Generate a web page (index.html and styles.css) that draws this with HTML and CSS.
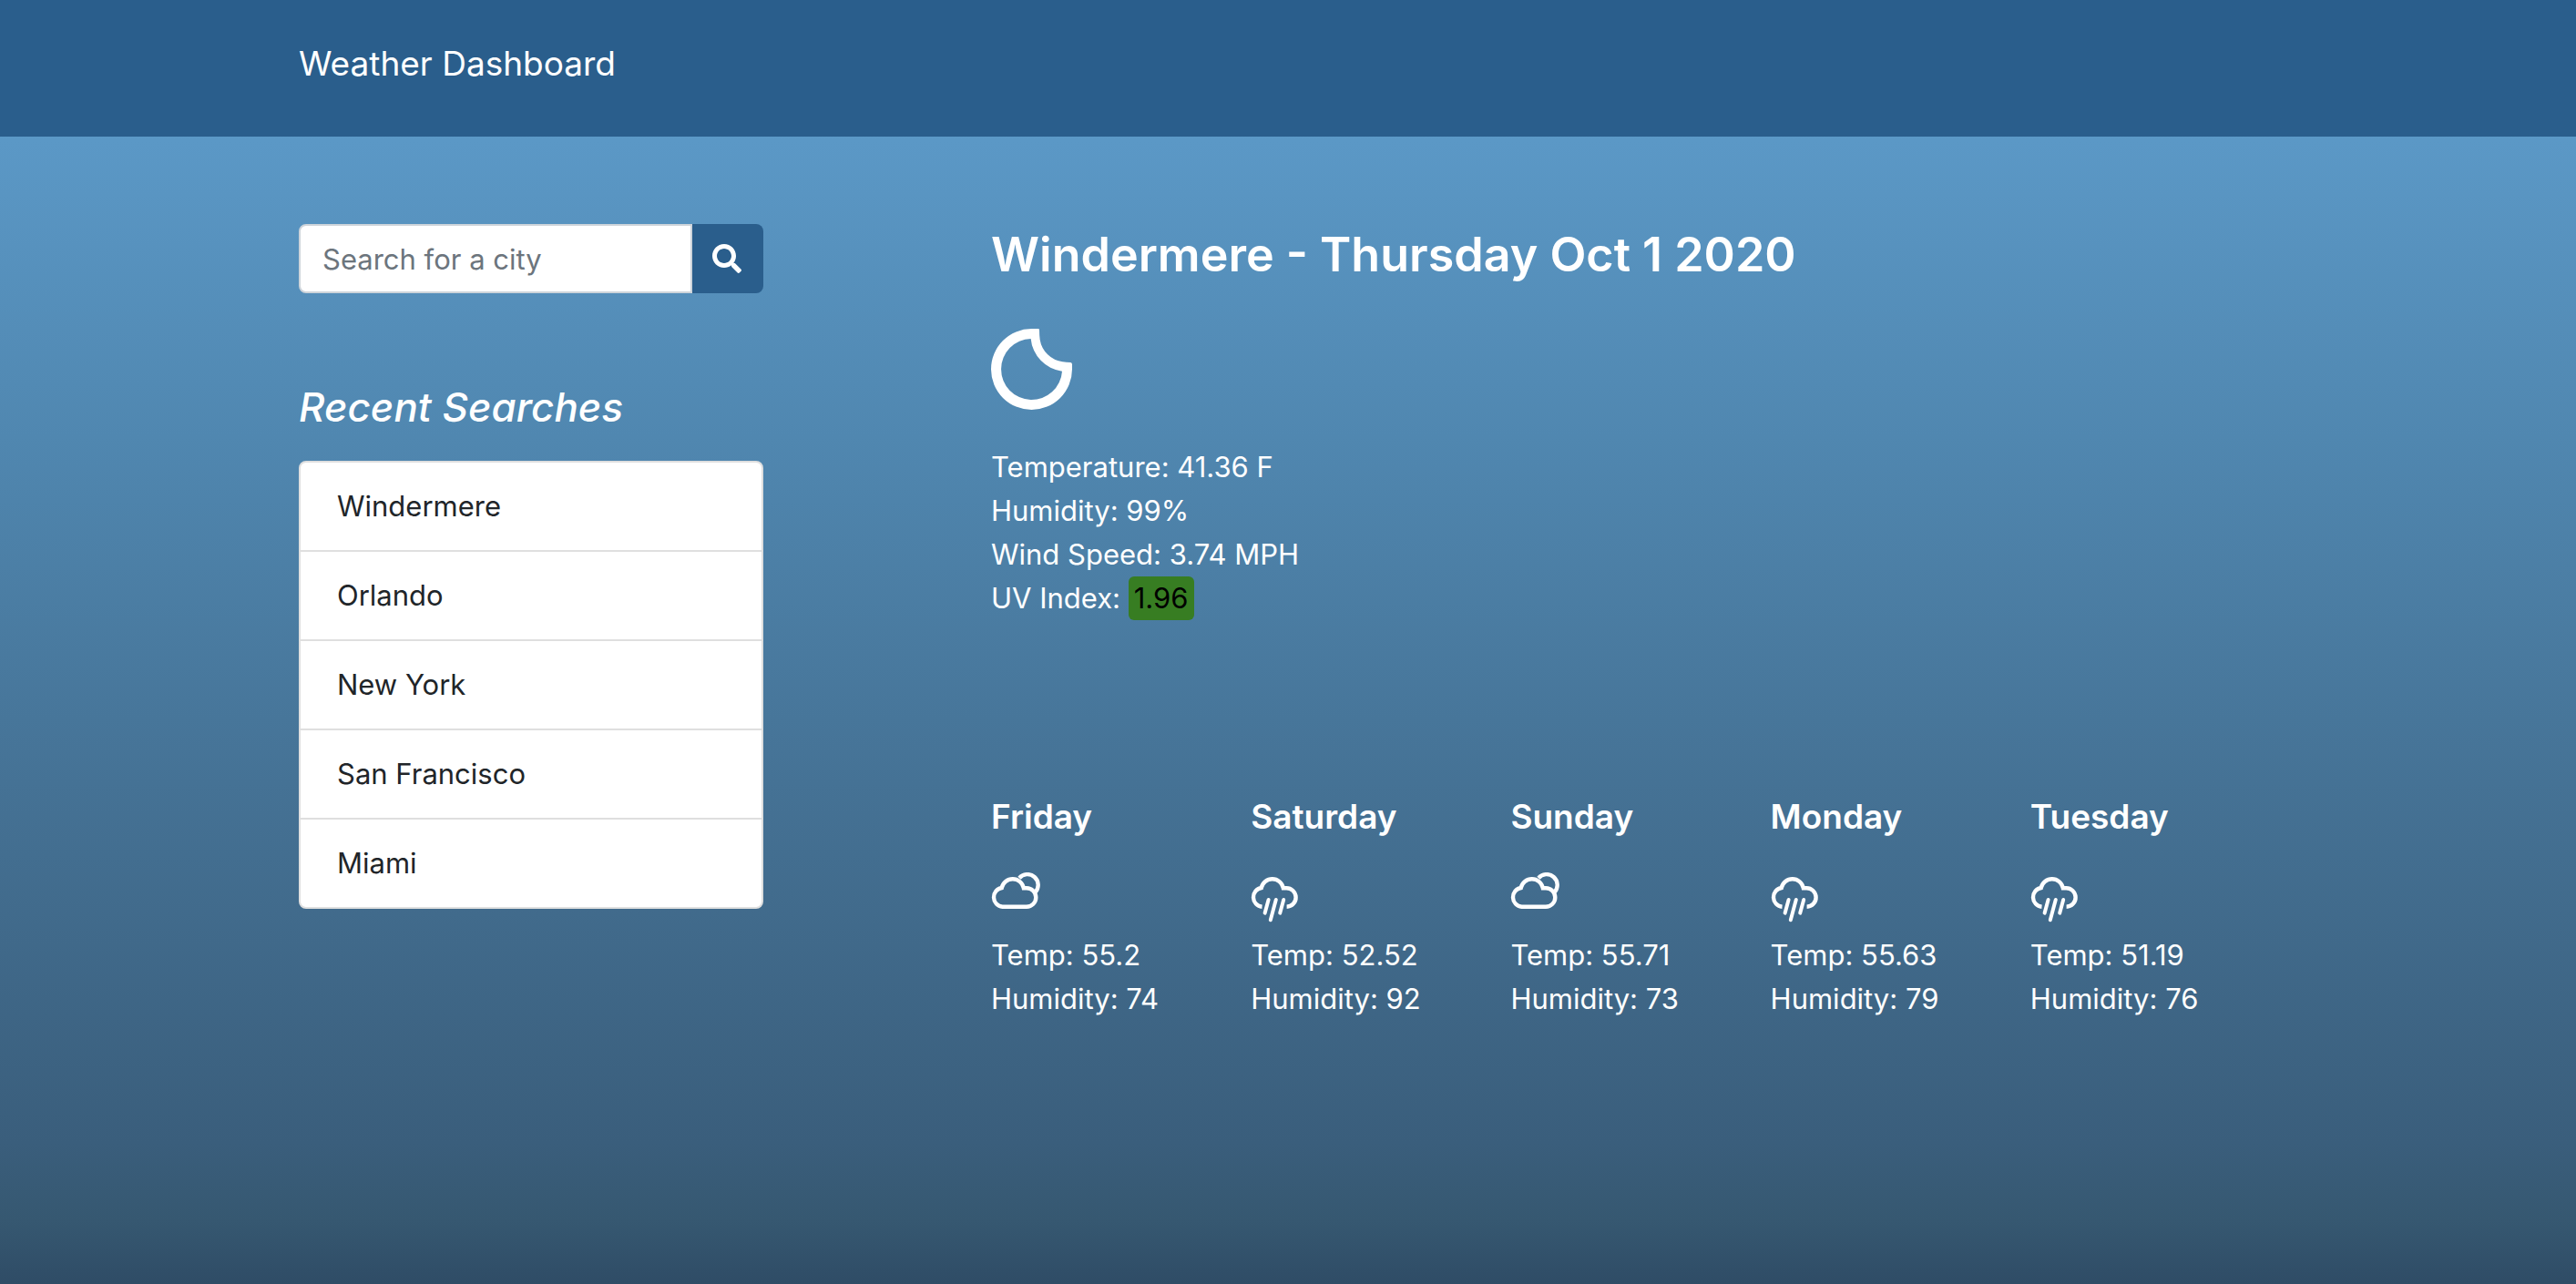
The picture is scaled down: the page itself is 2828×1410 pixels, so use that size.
FILE: index.html
```html
<!DOCTYPE html>
<html lang="en">
<head>
<meta charset="utf-8">
<meta name="viewport" content="width=device-width, initial-scale=1">
<title>Weather Dashboard</title>
<link rel="stylesheet" href="styles.css">
</head>
<body>
<svg class="sprite" aria-hidden="true">
  <symbol id="cloudy" viewBox="1 0 56 56">
    <path d="M13.5 37.8A10.5 10.5 0 0 1 12.7 17A12.3 12.3 0 0 1 36.8 17.2H40A10.3 10.3 0 0 1 40 37.8Z"/>
    <path d="M32 6.2A11.5 11.5 0 0 1 49.8 21.6"/>
  </symbol>
  <symbol id="rain" viewBox="1 0 56 56">
    <path d="M13.5 37.8A10.5 10.5 0 0 1 12.7 17A12.3 12.3 0 0 1 36.8 17.2H40A10.3 10.3 0 0 1 40.6 37.8"/>
    <path class="drops" d="M20.6 30L16.6 44.6M28.8 30L22.8 52.2M37.2 30L33.2 44.6"/>
  </symbol>
</svg>
<header class="site-header">
  <div class="container">
    <a class="brand" href="#">Weather Dashboard</a>
  </div>
</header>
<main class="container layout">
  <aside>
    <form class="search">
      <input class="search-input" type="text" placeholder="Search for a city" aria-label="Search for a city">
      <button class="search-button" type="button" aria-label="Search">
        <svg class="search-icon" viewBox="0 0 512 512" aria-hidden="true"><path d="M505 442.7L405.3 343c-4.5-4.5-10.6-7-17-7H372c27.6-35.3 44-79.7 44-128C416 93.1 322.9 0 208 0S0 93.1 0 208s93.1 208 208 208c48.3 0 92.7-16.4 128-44v16.3c0 6.4 2.5 12.5 7 17l99.7 99.7c9.4 9.4 24.6 9.4 33.9 0l28.3-28.3c9.4-9.4 9.4-24.6.1-34zM208 336c-70.7 0-128-57.2-128-128 0-70.7 57.2-128 128-128 70.7 0 128 57.2 128 128 0 70.7-57.2 128-128 128z"/></svg>
      </button>
    </form>
    <h2 class="recent-title">Recent Searches</h2>
    <ul class="recent-list">
      <li>Windermere</li>
      <li>Orlando</li>
      <li>New York</li>
      <li>San Francisco</li>
      <li>Miami</li>
    </ul>
  </aside>
  <div>
    <section class="current">
      <h1 class="city">Windermere - Thursday Oct 1 2020</h1>
      <svg class="moon" viewBox="0 0 267 267" aria-hidden="true"><path fill-rule="evenodd" d="M133.5 0H155Q159 0 159 4Q159 20 161 36A88 88 0 0 0 236 109Q248 111 262 111Q267 112 267 117V133.5A133.5 133.5 0 1 1 133.5 0ZM131 33A100.5 100.5 0 1 0 234 140A119 119 0 0 1 131 33Z"/></svg>
      <p>Temperature: 41.36 F</p>
      <p>Humidity: 99%</p>
      <p>Wind Speed: 3.74 MPH</p>
      <p>UV Index: <span class="uv">1.96</span></p>
    </section>
    <section class="forecast">
      <article>
        <h3 class="day">Friday</h3>
        <svg class="weather-icon" aria-hidden="true"><use href="#cloudy"/></svg>
        <p>Temp: 55.2</p>
        <p>Humidity: 74</p>
      </article>
      <article>
        <h3 class="day">Saturday</h3>
        <svg class="weather-icon" aria-hidden="true"><use href="#rain"/></svg>
        <p>Temp: 52.52</p>
        <p>Humidity: 92</p>
      </article>
      <article>
        <h3 class="day">Sunday</h3>
        <svg class="weather-icon" aria-hidden="true"><use href="#cloudy"/></svg>
        <p>Temp: 55.71</p>
        <p>Humidity: 73</p>
      </article>
      <article>
        <h3 class="day">Monday</h3>
        <svg class="weather-icon" aria-hidden="true"><use href="#rain"/></svg>
        <p>Temp: 55.63</p>
        <p>Humidity: 79</p>
      </article>
      <article>
        <h3 class="day">Tuesday</h3>
        <svg class="weather-icon" aria-hidden="true"><use href="#rain"/></svg>
        <p>Temp: 51.19</p>
        <p>Humidity: 76</p>
      </article>
    </section>
  </div>
</main>
</body>
</html>
```
FILE: styles.css
```css
* { box-sizing: border-box; }

body {
  margin: 0;
  min-height: 100vh;
  font: 400 31px/48px Inter, "Liberation Sans", sans-serif;
  color: #fff;
  background: linear-gradient(#5e9dcb 0%, #5b98c6 11%, #5087b0 34%, #457295 61%, #3a5e7c 89%, #365871 95%, #2f4c66 100%);
}

h1, h2, h3, p, ul { margin: 0; padding: 0; }

.sprite { display: none; }

.container {
  width: 100%;
  max-width: 2232px;
  margin: 0 auto;
  padding: 0 30px;
}

.site-header {
  height: 150px;
  padding-top: 40px;
  background: #2a5e8c;
}

.brand {
  display: block;
  font-size: 37px;
  line-height: 60px;
  color: #fff;
  text-decoration: none;
}

.layout {
  display: grid;
  grid-template-columns: 510px 1fr;
  gap: 250px;
  padding-top: 96px;
}

.search { display: flex; }

.search-input {
  flex: 1;
  min-width: 0;
  height: 76px;
  padding: 0 24px;
  border: 2px solid #ced4da;
  border-radius: 8px 0 0 8px;
  font: inherit;
  color: #495057;
  background: #fff;
}

.search-input::placeholder { color: #6c757d; opacity: 1; }

.search-button {
  display: grid;
  place-items: center;
  width: 78px;
  padding: 0 2px 0 0;
  border: 0;
  border-radius: 0 8px 8px 0;
  background: #2a5e8c;
}

.search-icon { width: 32px; height: 32px; fill: #fff; }

.recent-title {
  margin: 96px 0 30px;
  font-size: 44px;
  font-style: italic;
  font-weight: 500;
  line-height: 58px;
}

.recent-list {
  border: 2px solid #dfdfdf;
  border-radius: 8px;
  list-style: none;
  color: #212529;
  background: #fff;
}

.recent-list li { padding: 24px 40px; }
.recent-list li + li { border-top: 2px solid #dfdfdf; }

.city {
  font-size: 52px;
  font-weight: 600;
  line-height: 68px;
}

.moon {
  display: block;
  width: 89px;
  height: 89px;
  margin: 47px 0 39px;
  fill: #fff;
}

.uv {
  display: inline-block;
  padding: 0 6px;
  border-radius: 6px;
  color: #000;
  background: #377d22;
}

.forecast {
  display: grid;
  grid-template-columns: repeat(5, 1fr);
  gap: 14px;
  margin-top: 192px;
}

.day {
  font-size: 37px;
  font-weight: 600;
  line-height: 48px;
}

.weather-icon {
  display: block;
  width: 56px;
  height: 56px;
  margin: 37px 0 11px;
  fill: none;
  stroke: #fff;
  stroke-width: 4.4;
}

.drops { stroke-width: 4; stroke-linecap: round; }
```
